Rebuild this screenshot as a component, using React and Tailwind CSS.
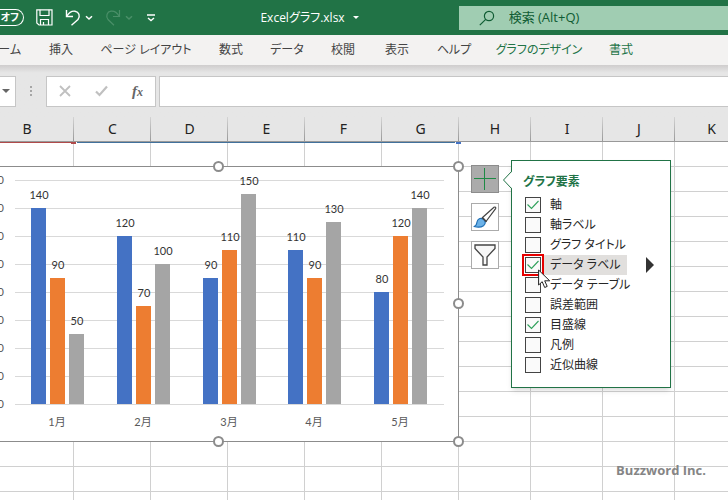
import { useState } from 'react'
import clsx from 'clsx'

const TABS = [
  { label: 'ホーム', width: 'w-[60px]' },
  { label: '挿入', width: 'w-[54px]' },
  { label: 'ページ レイアウト', width: 'w-[116px]' },
  { label: '数式', width: 'w-[54px]' },
  { label: 'データ', width: 'w-[58px]' },
  { label: '校閲', width: 'w-[54px]' },
  { label: '表示', width: 'w-[54px]' },
  { label: 'ヘルプ', width: 'w-[60px]' },
  { label: 'グラフのデザイン', width: 'w-[110px]', contextual: true },
  { label: '書式', width: 'w-[54px]', contextual: true },
]

// B is wider than the other data columns, H onwards are the default width
const COLUMNS = [
  { name: 'B', width: 'w-[94px]' },
  { name: 'C', width: 'w-[77px]' },
  { name: 'D', width: 'w-[77px]' },
  { name: 'E', width: 'w-[77px]' },
  { name: 'F', width: 'w-[77px]' },
  { name: 'G', width: 'w-[77px]' },
  { name: 'H', width: 'w-[72px]' },
  { name: 'I', width: 'w-[72px]' },
  { name: 'J', width: 'w-[72px]' },
  { name: 'K', width: 'w-[73px]' },
]
const ROWS = Array.from({ length: 15 }, (_, i) => i)

const MONTHS = [
  { name: '1月', values: [140, 90, 50] },
  { name: '2月', values: [120, 70, 100] },
  { name: '3月', values: [90, 110, 150] },
  { name: '4月', values: [110, 90, 130] },
  { name: '5月', values: [80, 120, 140] },
]
const SERIES_COLORS = ['#4472c4', '#ed7d31', '#a5a5a5']

const ELEMENTS = [
  { id: 'axes', label: '軸', on: true },
  { id: 'axis-titles', label: '軸ラベル' },
  { id: 'chart-title', label: 'グラフ タイトル' },
  { id: 'data-labels', label: 'データ ラベル', on: true, active: true },
  { id: 'data-table', label: 'データ テーブル' },
  { id: 'error-bars', label: '誤差範囲' },
  { id: 'gridlines', label: '目盛線', on: true },
  { id: 'legend', label: '凡例' },
  { id: 'trendline', label: '近似曲線' },
]

const Chevron = ({ className }) => (
  <svg viewBox="0 0 8 6" className={clsx('h-[6px] w-[8px]', className)} fill="none" stroke="currentColor" strokeWidth="1.5">
    <path d="M1 1.2 4 4 7 1.2" />
  </svg>
)

const TitleBar = () => (
  <header className="flex h-[35px] items-center bg-[#217346] text-white">
    <div className="flex flex-1 items-center">
      <button className="flex h-[17px] w-[24px] items-center justify-end rounded-r-full border border-l-0 border-white pr-1 text-[10px] font-bold">
        オフ
      </button>
      <button aria-label="上書き保存" className="ml-3">
        <svg viewBox="0 0 17 17" className="size-[17px]" fill="none" stroke="currentColor" strokeWidth="1.2">
          <path d="M.8 .8h15.2v15.2H3L.8 14z" />
          <path d="M4 .8v5.700h9V.8M4.500 16v-5.500h8V16M7.500 16v-3" />
        </svg>
      </button>
      <button aria-label="元に戻す" className="ml-3 flex items-center gap-1">
        <svg viewBox="0 0 16 17" className="h-[17px] w-[16px]" fill="none" stroke="currentColor" strokeWidth="1.4">
          <path d="M1.500 1v6.500H8" />
          <path d="M1.800 7.200C4 3.500 7 1.800 10 2.200c4 .6 5.500 5 3 8.300L6.500 16.300" />
        </svg>
        <Chevron />
      </button>
      <button aria-label="やり直し" className="ml-3 flex items-center gap-1 text-[#4a8f68]">
        <svg viewBox="0 0 16 17" className="h-[17px] w-[16px]" fill="none" stroke="currentColor" strokeWidth="1.2">
          <path d="M14.500 1v6.500H8" />
          <path d="M14.200 7.200C12 3.500 9 1.800 6 2.200 2 2.800 .5 7 3 10.500l6 5.800" />
        </svg>
        <Chevron />
      </button>
      <button aria-label="クイック アクセス ツール バーのユーザー設定" className="ml-[14px]">
        <svg viewBox="0 0 8 8" className="size-[8px]" fill="none" stroke="currentColor" strokeWidth="1.4">
          <path d="M0 1h8M1 4l3 2.500L7 4" />
        </svg>
      </button>
    </div>
    <button className="mr-[100px] flex items-center gap-2 text-[12px] whitespace-nowrap">
      Excelグラフ.xlsx
      <svg viewBox="0 0 6 3" className="h-[3px] w-[6px] shrink-0" fill="currentColor">
        <path d="M0 0h6L3 3z" />
      </svg>
    </button>
    <label className="flex h-6 w-[37%] items-center bg-[#a0cdb2] pl-5 text-[#0f5c33]">
      <svg viewBox="0 0 16 16" className="size-[16px]" fill="none" stroke="currentColor" strokeWidth="1.2">
        <circle cx="10" cy="6" r="4.600" />
        <path d="M6.700 9.300.8 15.200" />
      </svg>
      <input
        type="text"
        aria-label="検索"
        placeholder="検索 (Alt+Q)"
        className="ml-[14px] min-w-0 flex-1 bg-transparent text-[13px] outline-none placeholder:text-[#0f5c33]"
      />
    </label>
  </header>
)

const RibbonTabs = () => (
  <nav className="-ml-[26px] flex h-[30px] items-center bg-[#f3f2f1] text-[12px] whitespace-nowrap text-[#444]">
    {TABS.map(({ label, width, contextual }) => (
      <button key={label} className={clsx('shrink-0 text-center', width, contextual && 'text-[#217346]')}>
        {label}
      </button>
    ))}
  </nav>
)

const FormulaBar = () => (
  <div className="flex h-[52px] items-center bg-[#e6e6e6] bg-linear-to-b from-[#cfcdcd] via-[#e6e6e6] via-15% to-[#e6e6e6]">
    <button aria-label="名前ボックス" className="flex h-[31px] w-4 items-center justify-center border border-l-0 border-[#c6c6c6] bg-white pr-1">
      <svg viewBox="0 0 8 4" className="h-[4px] w-[8px] shrink-0" fill="#666">
        <path d="M0 0h8L4 4z" />
      </svg>
    </button>
    <div className="flex w-[30px] justify-center">
      <svg viewBox="0 0 2 10" className="h-[10px] w-[2px]" fill="#a6a6a6">
        <path d="M0 0h2v2H0zM0 4h2v2H0zM0 8h2v2H0z" />
      </svg>
    </div>
    <div className="mr-[3px] flex h-[31px] w-[110px] items-center justify-around border border-[#c6c6c6] bg-white text-[#c0c0c0]">
      <button aria-label="キャンセル">
        <svg viewBox="0 0 12 12" className="size-[12px]" fill="none" stroke="currentColor" strokeWidth="1.800">
          <path d="M1 1l10 10M11 1 1 11" />
        </svg>
      </button>
      <button aria-label="入力">
        <svg viewBox="0 0 13 12" className="h-[12px] w-[13px]" fill="none" stroke="currentColor" strokeWidth="2.200">
          <path d="M1 6.500l3.500 3.500L12 1.500" />
        </svg>
      </button>
      <button aria-label="関数の挿入" className="font-['Liberation_Serif',serif] text-[15px] leading-4 font-bold text-[#666] italic">
        f<span className="text-[12px]">x</span>
      </button>
    </div>
    <input type="text" aria-label="数式バー" className="h-[31px] min-w-0 flex-1 border border-r-0 border-[#c6c6c6] bg-white outline-none" />
  </div>
)

const SheetGrid = () => (
  <table className="-ml-[20px] w-[768px] table-fixed border-separate border-spacing-0">
    <colgroup>
      {COLUMNS.map(({ name, width }) => (
        <col key={name} className={width} />
      ))}
    </colgroup>
    <thead>
      <tr className="bg-[#e6e6e6]">
        {COLUMNS.map(({ name }) => (
          <th
            key={name}
            className="h-[25px] border-b border-[#999] bg-linear-to-b from-[#d4d4d4] to-[#999] bg-[length:1px_100%] bg-right bg-no-repeat p-0 font-['Noto_Sans',sans-serif] text-[14px] leading-4 font-normal text-[#222]"
          >
            {name}
          </th>
        ))}
      </tr>
    </thead>
    <tbody>
      {ROWS.map((row) => (
        <tr key={row}>
          {COLUMNS.map(({ name }) => (
            <td key={name} className="h-[25px] border-r border-b border-[#d0d0d0] p-0" />
          ))}
        </tr>
      ))}
    </tbody>
  </table>
)

// Plot area: 0 sits at y=243, every 20 units is 28px
const BASE = 243
const LEFT = 15
const barHeight = (value) => value * 1.4
const groupLeft = (group) => LEFT + Math.round(group * 85.8)

const Chart = () => (
  <svg viewBox="0 0 470 290" className="absolute top-[44px] left-0 h-[290px] w-[470px]" fontFamily="Lato, 'Noto Sans CJK JP', sans-serif">
    <path d="M-1 5.500H458.500V280.500H-1z" fill="#fff" stroke="#8c8c8c" />
    {Array.from({ length: 9 }, (_, i) => (
      <g key={i}>
        <path d={`M${LEFT} ${BASE - i * 28 + 0.5}H444`} stroke="#d9d9d9" />
        <text x="4" y={BASE - i * 28 + 4} textAnchor="end" fontSize="11" fill="#595959">
          {i * 20}
        </text>
      </g>
    ))}
    {MONTHS.map(({ name, values }, group) => (
      <g key={name}>
        {values.map((value, i) => {
          const x = groupLeft(group) + 16 + i * 19
          const y = BASE - barHeight(value)
          return (
            <g key={i}>
              <rect x={x} y={y} width="15" height={barHeight(value)} fill={SERIES_COLORS[i]} />
              <text x={x + 8} y={y - 9} textAnchor="middle" fontSize="11" fill="#333">
                {value}
              </text>
            </g>
          )
        })}
        <text x={groupLeft(group) + 42} y={BASE + 22} textAnchor="middle" fontSize="11" fill="#595959">
          {name}
        </text>
      </g>
    ))}
    <g fill="#fff" stroke="#8c8c8c" strokeWidth="2">
      <circle cx="218.500" cy="5.500" r="4.500" />
      <circle cx="458.500" cy="5.500" r="4.500" />
      <circle cx="458.500" cy="142.500" r="4.500" />
      <circle cx="218.500" cy="280.500" r="4.500" />
      <circle cx="458.500" cy="280.500" r="4.500" />
    </g>
  </svg>
)

const ChartButtons = () => (
  <div className="absolute top-[48px] left-[471px] flex flex-col gap-[10px]">
    <button aria-label="グラフ要素" className="size-[28px] border border-[#8c8c8c] bg-[#ababab]">
      <svg viewBox="0 0 26 26" className="size-[26px]" fill="#1e8a45">
        <path d="M12 2h1v22h-1zM2 12h22v1H2z" />
      </svg>
    </button>
    <button aria-label="グラフ スタイル" className="size-[28px] border border-[#ababab] bg-white">
      <svg viewBox="0 0 26 26" className="size-[26px]" strokeLinejoin="round">
        <path d="M10.500 13.500 22 3.300c1.200-.8 2.200.2 1.600 1.400L14 17.500z" fill="#fff" stroke="#444" strokeWidth="1.200" />
        <path d="M2 22.500c2.500-.5 2.500-2 3-4.500.6-3 3.500-4.600 6-3 2.800 1.700 3 5 .5 6.800-2.500 1.700-6 1.700-9.500.7z" fill="#6cb2e8" stroke="#1f6fb5" strokeWidth="1.200" />
        <path d="M10 13.500l4.500 4.300" stroke="#444" strokeWidth="1.400" />
      </svg>
    </button>
    <button aria-label="グラフ フィルター" className="size-[28px] border border-[#ababab] bg-white">
      <svg viewBox="0 0 26 26" className="size-[26px]" fill="#f7f7f7" stroke="#444" strokeWidth="1.300">
        <path d="M3 3h20v3.500l-8 8.500v8h-4v-8L3 6.500z" />
      </svg>
    </button>
  </div>
)

const ElementsFlyout = () => {
  const [checked, setChecked] = useState(() => ELEMENTS.filter((el) => el.on).map((el) => el.id))

  const toggle = (id) => {
    setChecked((prev) => (prev.includes(id) ? prev.filter((x) => x !== id) : [...prev, id]))
  }

  return (
    <section className="absolute top-[43px] left-[511px] w-[160px] border border-[#217346] bg-white pt-[11px] pb-3 pl-[11px] shadow-md">
      <svg viewBox="0 0 11 20" className="absolute top-[9px] -left-[10px] h-[20px] w-[11px]">
        <path d="M10.500 1 1.500 10l9 9" fill="#fff" />
        <path d="M9.500 1.500 1.500 10l8 8.500" fill="none" stroke="#217346" />
        <path d="M10.500 2v16" stroke="#fff" />
      </svg>
      <h2 className="mb-[3px] text-[12px] leading-5 font-bold text-[#217346]">グラフ要素</h2>
      <ul>
        {ELEMENTS.map(({ id, label, active }) => (
          <li key={id} className="relative flex h-5 items-center">
            <label className="flex items-center text-[12px] leading-5 whitespace-nowrap text-[#262626]">
              <span className="grid w-5 place-items-center">
                <input
                  type="checkbox"
                  checked={checked.includes(id)}
                  onChange={() => toggle(id)}
                  className="col-start-1 row-start-1 size-[16px] appearance-none border border-[#444] bg-[#fafafa]"
                />
                {checked.includes(id) && (
                  <svg viewBox="0 0 12 10" className="pointer-events-none col-start-1 row-start-1 h-[10px] w-[12px]" fill="none" stroke="#2ea05a" strokeWidth="1.100">
                    <path d="M.5 4.500 4.500 8.500 11.500 1" />
                  </svg>
                )}
              </span>
              <span className={clsx('w-[84px] pl-[7px]', active && 'bg-[#e1dfdd]')}>{label}</span>
            </label>
            {active && (
              <>
                <button aria-label="その他のオプション" className="ml-[19px]">
                  <svg viewBox="0 0 8 16" className="h-[16px] w-[8px]" fill="#333">
                    <path d="M0 0l8 8-8 8z" />
                  </svg>
                </button>
                <span className="absolute -top-px -left-px h-[22px] w-[22px] border-2 border-[#e60000]" />
              </>
            )}
          </li>
        ))}
      </ul>
    </section>
  )
}

const Cursor = () => (
  <svg viewBox="0 0 13 20" className="absolute top-[152px] left-[538px] h-[20px] w-[13px]" fill="#fff" stroke="#222">
    <path d="M.6 1v15l3.600-3.300 2.500 5.800 2.500-1.100-2.500-5.600h5z" />
  </svg>
)

const App = () => {
  return (
    <div className="h-screen overflow-hidden bg-white font-['Open_Sans','Noto_Sans_CJK_JP',sans-serif] [font-feature-settings:'palt']">
      <TitleBar />
      <RibbonTabs />
      <FormulaBar />
      <main className="relative">
        <SheetGrid />
        {/* range markers under the column header */}
        <span className="absolute top-[25px] left-0 h-px w-[71px] bg-[#b04a4a]" />
        <span className="absolute top-[25px] left-[71px] h-[2px] w-[5px] bg-[#b04a4a]" />
        <span className="absolute top-[25px] left-[77px] h-px w-[378px] bg-[#41719c]" />
        <span className="absolute top-[25px] left-[456px] h-[2px] w-[5px] bg-[#4472c4]" />
        <Chart />
        <ChartButtons />
        <ElementsFlyout />
        <Cursor />
        <p className="absolute top-[343px] right-[22px] text-[13px] leading-5 font-bold text-[#858585]">Buzzword Inc.</p>
      </main>
    </div>
  )
}

export default App
